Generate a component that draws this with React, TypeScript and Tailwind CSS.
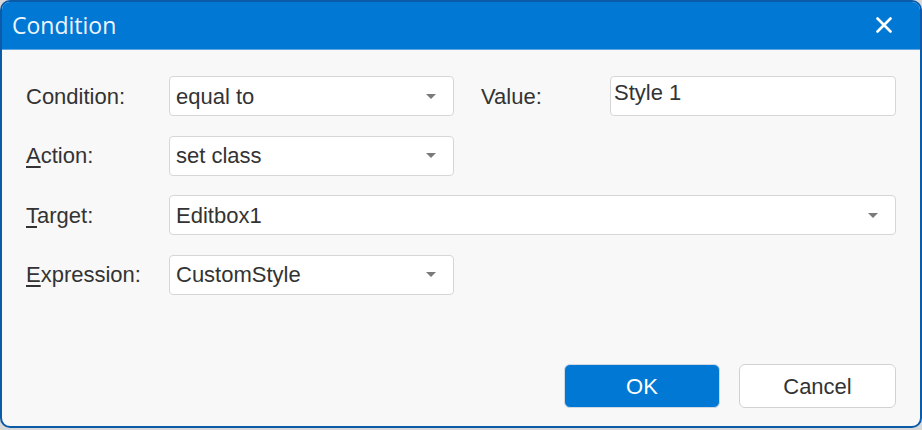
import React from "react";

function Arrow() {
  return (
    <svg width="10" height="5" viewBox="0 0 10 5" className="shrink-0">
      <path d="M0 0 L10 0 L5 5 Z" fill="#7a7a7a" />
    </svg>
  );
}

function Select({ value, className }: { value: string; className: string }) {
  return (
    <div
      className={`h-[40px] flex items-center justify-between pl-[6px] pr-[17px] bg-white border border-[#d6d6d6] rounded-[4px] ${className}`}
    >
      <span>{value}</span>
      <Arrow />
    </div>
  );
}

function Label({ children }: { children: React.ReactNode }) {
  return <div className="w-[143px] shrink-0">{children}</div>;
}

export default function App() {
  return (
    <div className="w-[922px] h-[430px] bg-[#d9d9d9]">
      <div className="w-[922px] h-[428px] flex flex-col border-2 border-[#0c5ba9] rounded-[10px] overflow-hidden bg-[#f8f8f8]">
        <div className="h-[48px] shrink-0 bg-[#0078d4] flex items-center justify-between pl-[10px] pr-[28px] border-b border-[#5fa5e3]">
          <span
            className="text-[23px] text-[#eef5fc] leading-none -mt-[1px]"
            style={{ fontFamily: '"Open Sans", sans-serif' }}
          >
            Condition
          </span>
          <svg width="16" height="16" viewBox="0 0 16 16" className="-mt-[2px]">
            <path d="M1.5 1.5 L14.5 14.5 M14.5 1.5 L1.5 14.5" stroke="#ffffff" strokeWidth="2.6" strokeLinecap="round" />
          </svg>
        </div>

        <div
          className="flex-1 flex flex-col pt-[26px] pl-[24px] pr-[24px] pb-[18px] text-[22px] text-[#333333]"
          style={{ fontFamily: '"Liberation Sans", Arial, sans-serif' }}
        >
          <div className="flex flex-col gap-[19.5px]">
            <div className="flex items-center">
              <Label>Condition:</Label>
              <Select value="equal to" className="w-[285px]" />
              <div className="w-[129px] ml-[27px] shrink-0">Value:</div>
              <div className="w-[286px] h-[40px] bg-white border border-[#d6d6d6] rounded-[4px] pl-[3px] pt-[3px] leading-[26px]">
                Style 1
              </div>
            </div>
            <div className="flex items-center">
              <Label>
                <span className="underline underline-offset-[3px]">A</span>ction:
              </Label>
              <Select value="set class" className="w-[285px]" />
            </div>
            <div className="flex items-center">
              <Label>
                <span className="underline underline-offset-[3px]">T</span>arget:
              </Label>
              <Select value="Editbox1" className="flex-1" />
            </div>
            <div className="flex items-center">
              <Label>
                <span className="underline underline-offset-[3px]">E</span>xpression:
              </Label>
              <Select value="CustomStyle" className="w-[285px]" />
            </div>
          </div>

          <div className="mt-auto flex justify-end gap-[19px]">
            <button className="w-[156px] h-[44px] bg-[#0078d4] text-white border border-[#cfd8e3] rounded-[6px]">
              OK
            </button>
            <button className="w-[157px] h-[44px] bg-white text-[#333333] border border-[#d2d2d2] rounded-[6px]">
              Cancel
            </button>
          </div>
        </div>
      </div>
    </div>
  );
}
